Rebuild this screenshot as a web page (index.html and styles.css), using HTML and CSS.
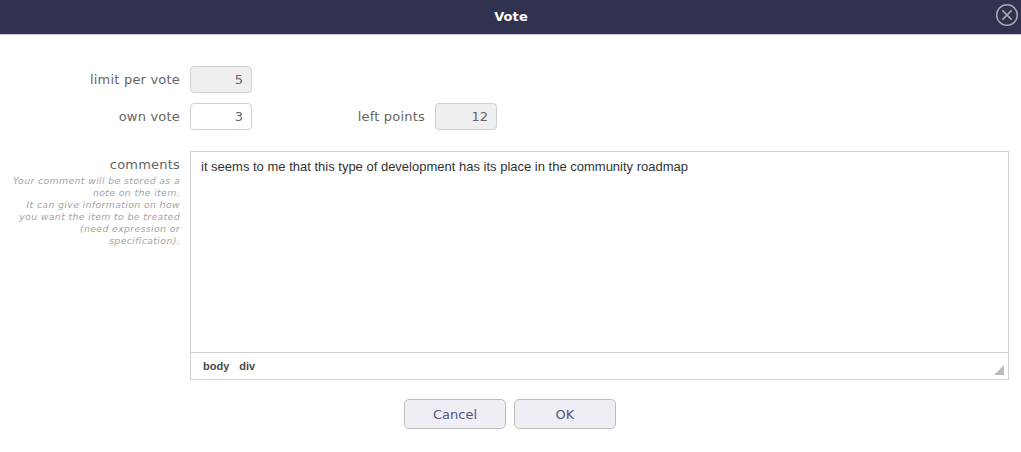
FILE: index.html
```html
<!DOCTYPE html>
<html lang="en">
<head>
<meta charset="utf-8">
<title>Vote</title>
<link rel="stylesheet" href="styles.css">
</head>
<body>
<header class="titlebar">
  <span class="title">Vote</span>
  <svg class="close" width="24" height="24" viewBox="0 0 24 24" fill="none" stroke="#a6a9b0"><circle cx="12" cy="12" r="10.3" stroke-width="1.5"/><path d="M7.4 7.4l9.2 9.2M16.6 7.4l-9.2 9.2" stroke-width="1.5"/></svg>
</header>
<main class="form">
  <div class="row">
    <span class="label">limit per vote</span>
    <span class="field readonly">5</span>
  </div>
  <div class="row">
    <span class="label">own vote</span>
    <span class="field">3</span>
    <span class="label label-left">left points</span>
    <span class="field readonly">12</span>
  </div>
  <div class="comment-row">
    <div class="label-block">
      <div class="label-text">comments</div>
      <div class="hint">Your comment will be stored as a<br>note on the item.<br>It can give information on how<br>you want the item to be treated<br>(need expression or<br>specification).</div>
    </div>
    <div class="editor">
      <div class="content"><span>it seems to me that this type of development has its place in the community roadmap</span></div>
      <div class="path"><span>body</span><span>div</span><svg class="grip" width="10" height="10" viewBox="0 0 10 10"><path d="M10 0v10H0z" fill="#bcbcbc"/></svg></div>
    </div>
  </div>
  <div class="actions">
    <span class="button">Cancel</span>
    <span class="button">OK</span>
  </div>
</main>
</body>
</html>
```
FILE: styles.css
```css
* { box-sizing: border-box; }
body {
  margin: 0;
  background: #fff;
  color: #656565;
  font: 13px/16px "DejaVu Sans", Verdana, sans-serif;
}
.titlebar {
  display: flex;
  align-items: center;
  height: 35px;
  padding: 0 2px 4px 26px;
  background: #313150;
  border-bottom: 1px solid #c6c6cc;
}
.title {
  flex: 1;
  padding: 4px 0 0 1px;
  text-align: center;
  color: #fff;
  font-size: 13px;
  font-weight: bold;
  letter-spacing: 0.1px;
}
.close { flex: none; }
.form { padding: 31px 12px 0 0; }
.row {
  display: flex;
  align-items: center;
  height: 27px;
  margin-bottom: 10px;
}
.label {
  width: 180px;
  margin-right: 10px;
  text-align: right;
  white-space: nowrap;
  letter-spacing: 0.2px;
}
.label-left { width: 173px; }
.field {
  width: 62px;
  height: 27px;
  padding: 5px 8px 0 0;
  border: 1px solid #d0d0d0;
  border-radius: 4px;
  text-align: right;
}
.readonly { background: #efefef; }
.comment-row {
  display: flex;
  margin-top: 21px;
}
.label-block {
  width: 190px;
  padding: 6px 10px 0 0;
  text-align: right;
  white-space: nowrap;
}
.label-text { letter-spacing: 0.2px; }
.hint {
  padding-top: 2px;
  color: #a4a4a4;
  font-size: 9.4px;
  font-style: italic;
  letter-spacing: 0.34px;
  line-height: 12px;
}
.editor {
  display: flex;
  flex-direction: column;
  flex: 1;
  height: 229px;
  border: 1px solid #d1d1d1;
}
.content {
  flex: 1;
  padding: 7px 10px;
  color: #333;
  font: 13px/16px "Liberation Sans", Arial, sans-serif;
}
.path {
  display: flex;
  align-items: center;
  gap: 10px;
  height: 27px;
  padding: 0 4px 0 12px;
  border-top: 1px solid #d1d1d1;
  color: #484848;
  font: bold 11px/16px "Liberation Sans", Arial, sans-serif;
}
.grip {
  margin: 7px 0 0 auto;
}
.actions {
  display: flex;
  justify-content: center;
  gap: 8px;
  padding-left: 11px;
  margin-top: 19px;
}
.button {
  width: 102px;
  height: 30px;
  padding-top: 7px;
  border: 1px solid #bcbcbc;
  border-radius: 5px;
  background: #efeef5;
  color: #545381;
  text-align: center;
}
```
